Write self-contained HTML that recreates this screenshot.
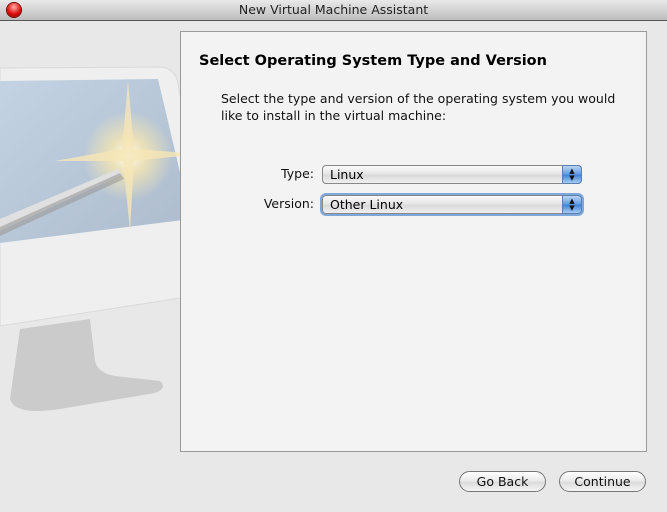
<!DOCTYPE html>
<html><head><style>
body{margin:0;width:667px;height:512px;overflow:hidden;background:#e8e8e8;font-family:"DejaVu Sans","Liberation Sans",sans-serif;position:relative}
.tb{position:absolute;left:0;top:0;width:667px;height:20px;background:linear-gradient(#e9e9e9,#bdbdbd);border-bottom:1px solid #555;text-align:center;font-size:12.5px;line-height:20px;color:#222}
.dot{position:absolute;left:7px;top:3px;width:14px;height:14px;border-radius:50%;background:radial-gradient(circle at 50% 30%,#ffb0a8,#e01010 55%,#8a0000);box-shadow:0 0 0 1px #700}
.panel{position:absolute;left:180px;top:31px;width:465px;height:419px;background:#f3f3f3;border:1px solid #9a9a9a}
h1{position:absolute;left:18px;top:21px;margin:0;font-size:14.5px;font-weight:bold;color:#000;white-space:nowrap}
.desc{position:absolute;left:40px;top:58px;font-size:12.5px;line-height:17px;color:#111;width:410px}
.lbl{position:absolute;font-size:12.5px;color:#111;text-align:right;width:70px}
.pop{position:absolute;left:141px;width:260px;height:19px;border:1px solid #888;border-radius:4px;background:linear-gradient(#fafafa,#e4e4e4 50%,#d8d8d8 52%,#f0f0f0);font-size:12.5px;line-height:18px;box-sizing:border-box;padding-left:7px}
.pop .ar{position:absolute;right:-1px;top:-1px;width:20px;height:19px;border-radius:0 4px 4px 0;background:linear-gradient(#b9d4f4,#5f99e4 50%,#3d80d8 52%,#a5cbf5);border:1px solid #5a7fb0;box-sizing:border-box;font-size:7px;line-height:7px;text-align:center;padding-top:2px;color:#111}
.btn{position:absolute;top:471px;height:21px;border:1px solid #777;border-radius:11px;background:linear-gradient(#fff,#e8e8e8 50%,#dadada 52%,#f5f5f5);font-size:12.5px;line-height:20px;text-align:center;box-sizing:border-box;color:#111}
</style></head><body>
<div class="tb"><div class="dot"></div>New Virtual Machine Assistant</div>
<svg style="position:absolute;left:0;top:21px" width="215" height="400">
<defs><linearGradient id="s" x1="0" y1="0" x2="1" y2="1"><stop offset="0" stop-color="#c3d3e3"/><stop offset="1" stop-color="#adbbcc"/></linearGradient>
<radialGradient id="g"><stop offset="0" stop-color="#fffdf0"/><stop offset=".4" stop-color="#f7e7b0" stop-opacity=".8"/><stop offset="1" stop-color="#f7e7b0" stop-opacity="0"/></radialGradient></defs>
<path d="M0 47 L160 46 Q175 47 178 62 L212 260 Q214 272 200 274 L0 305 Z" fill="#efefef" stroke="#dadada"/>
<path d="M0 60 L158 58 L191 198 L0 222 Z" fill="url(#s)"/>
<path d="M20 308 L90 298 L95 340 Q98 352 115 355 L160 360 Q168 367 155 372 L60 388 Q15 395 10 378 Z" fill="#cbcbcb"/>
<circle cx="128" cy="135" r="45" fill="url(#g)"/>
<path d="M128 60 L134 128 L200 133 L134 140 L130 210 L123 140 L55 140 L122 128 Z" fill="#f6e6b6" opacity=".8"/>
<path d="M0 198 L118 148 L122 154 L0 210 Z" fill="#e0e0e0"/>
<path d="M0 206 L120 152 L124 158 L0 215 Z" fill="#9a9a9a" opacity=".6"/>
</svg>
<div class="panel">
<h1>Select Operating System Type and Version</h1>
<div class="desc">Select the type and version of the operating system you would like to install in the virtual machine:</div>
<div class="lbl" style="left:63px;top:134px">Type:</div>
<div class="pop" style="top:133px">Linux<div class="ar">▲<br>▼</div></div>
<div class="lbl" style="left:63px;top:164px">Version:</div>
<div class="pop" style="top:163px;box-shadow:0 0 0 2px #7ea8dc">Other Linux<div class="ar">▲<br>▼</div></div>
</div>
<div class="btn" style="left:459px;width:87px">Go Back</div>
<div class="btn" style="left:559px;width:87px">Continue</div>
</body></html>
